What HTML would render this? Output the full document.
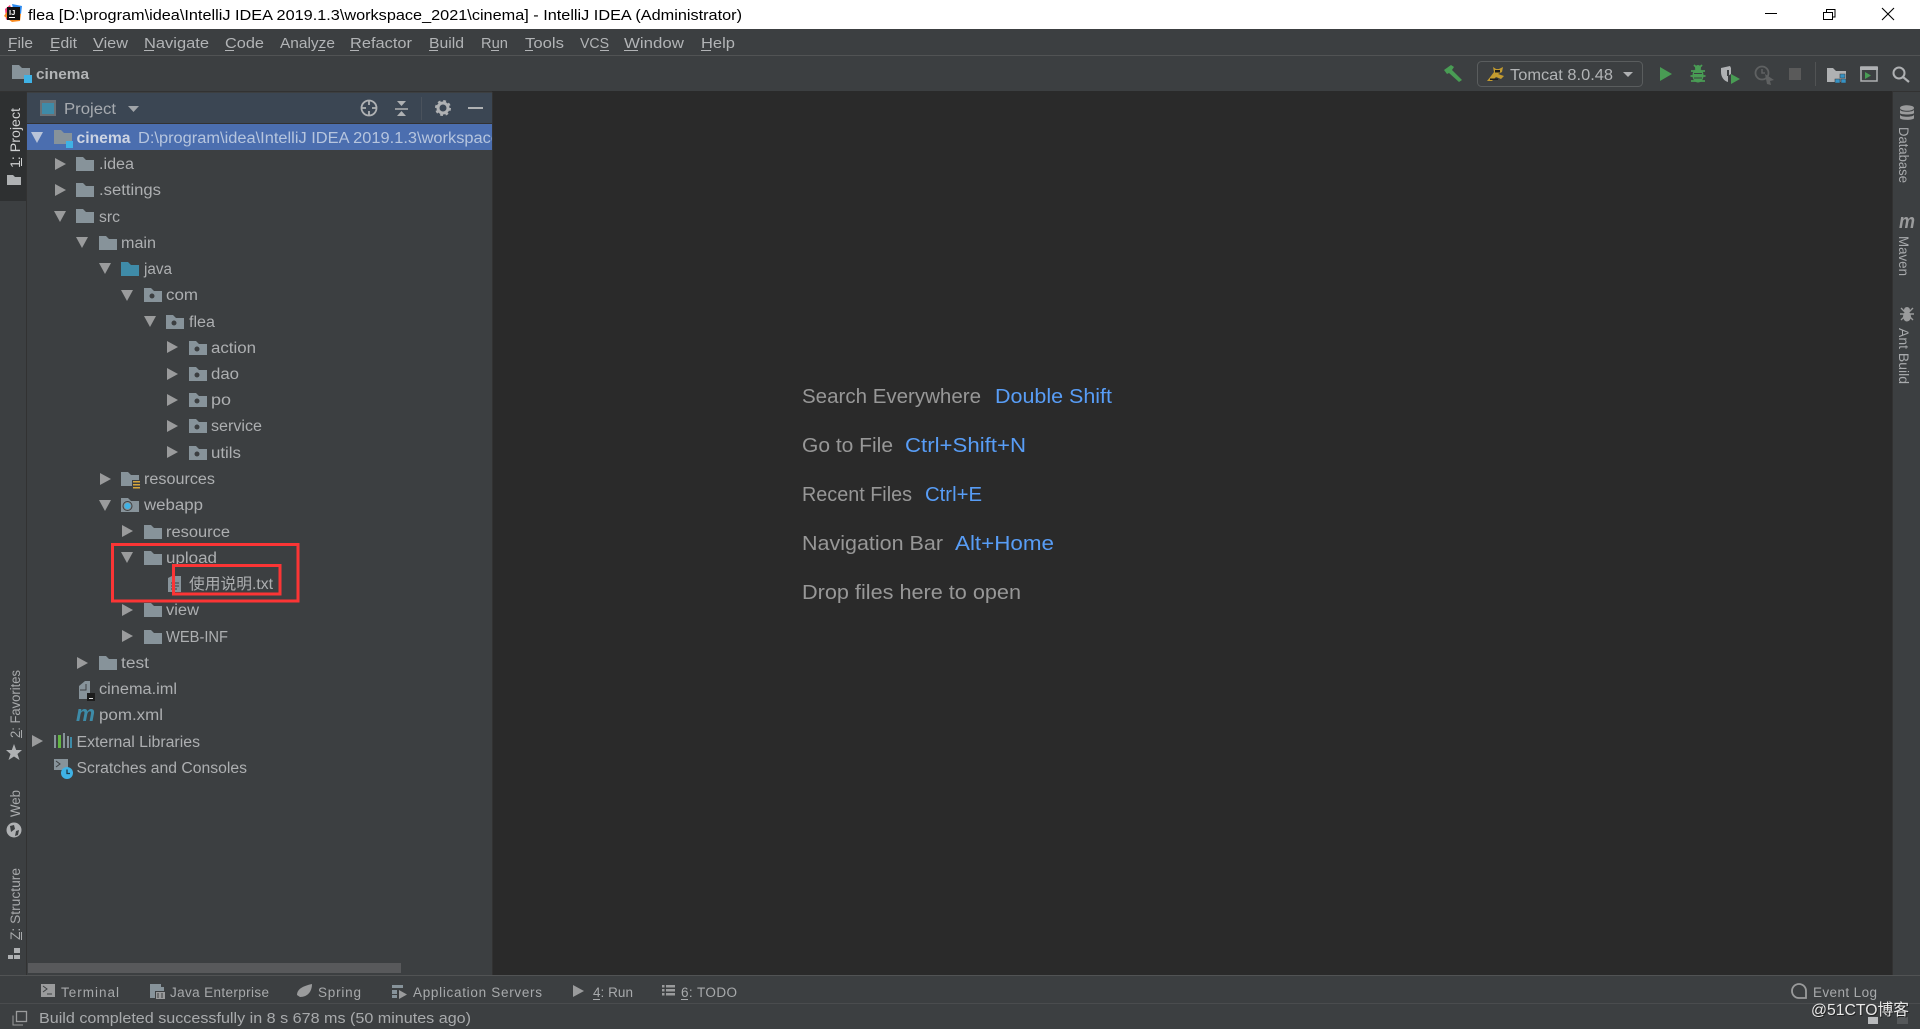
<!DOCTYPE html>
<html><head><meta charset="utf-8"><title>flea - IntelliJ IDEA</title>
<style>
html,body{margin:0;padding:0;background:#3c3f41;overflow:hidden}
svg{display:block}
text{font-family:"Liberation Sans","Noto Sans CJK SC",sans-serif;white-space:pre}
.t{font-size:15.5px;fill:#adafb1}
.m{font-size:15px;fill:#b2b4b6}
.b{font-size:13.5px;fill:#a8aaac}
.h{font-size:20px;fill:#979797}
.k{font-size:20px;fill:#589df6}
.r{font-size:13.5px;fill:#a8aaac}
</style></head><body>
<svg width="1920" height="1029" viewBox="0 0 1920 1029" xmlns="http://www.w3.org/2000/svg">
<defs>
<g id="ar"><path d="M0 0L11 6L0 12z" fill="#9a9b9c"/></g>
<g id="ad"><path d="M0 1H12L6 12z" fill="#9a9b9c"/></g>
<g id="f"><path d="M0 0H7L10 3H18V14H0z" fill="#87939a"/></g>
<g id="p"><path d="M0 0H7L10 3H18V14H0z" fill="#87939a"/><circle cx="8" cy="8" r="2.5" fill="#3c3f41"/></g>
<clipPath id="cp"><rect x="27" y="124" width="465" height="26"/></clipPath>
</defs>

<!-- title bar -->
<rect width="1920" height="29" fill="#fff"/>
<path d="M5 9L10 5L13 13L6 20z" fill="#fb3f7a"/><path d="M12 4L22 6L21 14L14 12z" fill="#2f8cf0"/><path d="M4 16L12 22L20 21L21 14L8 10z" fill="#f98b20"/>
<rect x="7" y="7" width="13" height="13" fill="#111"/>
<text x="9" y="15" font-weight="bold" fill="#fff" style="font-size:7.5px">IJ</text>
<rect x="9" y="17" width="6" height="1" fill="#fff"/>
<text x="28" y="20" style="font-size:15px" fill="#000" textLength="714" lengthAdjust="spacingAndGlyphs">flea [D:\program\idea\IntelliJ IDEA 2019.1.3\workspace_2021\cinema] - IntelliJ IDEA (Administrator)</text>
<rect x="1765" y="13" width="12" height="1" fill="#000"/>
<path d="M1823.5 12.5h9v7h-9zM1826.5 12V9.5h8.500v7.500H1833" fill="none" stroke="#000"/>
<path d="M1882 8L1894 20M1894 8L1882 20" stroke="#000" stroke-width="1.100"/>

<!-- menu -->
<rect y="29" width="1920" height="26" fill="#3c3f41"/>
<rect y="55" width="1920" height="1" fill="#515354"/>
<text class="m" x="8" y="48" textLength="25" lengthAdjust="spacingAndGlyphs">File</text>
<text class="m" x="50" y="48" textLength="27" lengthAdjust="spacingAndGlyphs">Edit</text>
<text class="m" x="93" y="48" textLength="35" lengthAdjust="spacingAndGlyphs">View</text>
<text class="m" x="144" y="48" textLength="65" lengthAdjust="spacingAndGlyphs">Navigate</text>
<text class="m" x="225" y="48" textLength="39" lengthAdjust="spacingAndGlyphs">Code</text>
<text class="m" x="280" y="48" textLength="55" lengthAdjust="spacingAndGlyphs">Analyze</text>
<text class="m" x="350" y="48" textLength="62" lengthAdjust="spacingAndGlyphs">Refactor</text>
<text class="m" x="429" y="48" textLength="35" lengthAdjust="spacingAndGlyphs">Build</text>
<text class="m" x="481" y="48" textLength="27" lengthAdjust="spacingAndGlyphs">Run</text>
<text class="m" x="525" y="48" textLength="39" lengthAdjust="spacingAndGlyphs">Tools</text>
<text class="m" x="580" y="48" textLength="29" lengthAdjust="spacingAndGlyphs">VCS</text>
<text class="m" x="624" y="48" textLength="60" lengthAdjust="spacingAndGlyphs">Window</text>
<text class="m" x="701" y="48" textLength="34" lengthAdjust="spacingAndGlyphs">Help</text>
<g fill="#b2b4b6">
<rect x="8" y="50" width="8" height="1"/><rect x="50" y="50" width="8" height="1"/><rect x="93" y="50" width="10" height="1"/><rect x="144" y="50" width="10" height="1"/><rect x="225" y="50" width="9" height="1"/><rect x="318" y="50" width="7" height="1"/><rect x="350" y="50" width="9" height="1"/><rect x="429" y="50" width="9" height="1"/><rect x="491" y="50" width="8" height="1"/><rect x="525" y="50" width="8" height="1"/><rect x="600" y="50" width="9" height="1"/><rect x="624" y="50" width="14" height="1"/><rect x="701" y="50" width="10" height="1"/>
</g>

<!-- nav bar -->
<rect y="56" width="1920" height="35" fill="#3c3f41"/>
<rect y="91" width="1920" height="1" fill="#323232"/>
<use href="#f" x="12" y="65" />
<rect x="24" y="75" width="8" height="8" fill="#3fb2e5"/>
<text x="36" y="79" font-weight="bold" style="font-size:15px;fill:#b2b4b6" textLength="53" lengthAdjust="spacingAndGlyphs">cinema</text>

<!-- hammer -->
<path d="M1444 70L1451 65L1454 67L1452 70L1462 80L1459 82L1449 73L1447 74z" fill="#499c54"/>
<rect x="1477.500" y="61.500" width="165" height="25" rx="4" fill="none" stroke="#5a5d5e"/>
<path d="M1487 81L1491 76L1494 72L1493 67L1496 69L1499 69L1503 67L1502 72L1498 74L1504 76L1501 79L1496 77L1492 81z" fill="#c29a2f"/>
<path d="M1495 70h5v2.500h-5zM1490 78.500h8v1.500h-8z" fill="#1b1b1b"/>
<text x="1510" y="80" style="font-size:15.5px;fill:#b2b4b6" textLength="103" lengthAdjust="spacingAndGlyphs">Tomcat 8.0.48</text>
<path d="M1623 72H1633L1628 77z" fill="#afb1b3"/>
<path d="M1660 67L1672 74L1660 81z" fill="#499c54"/>
<!-- bug -->
<ellipse cx="1698" cy="75.500" rx="5.500" ry="7" fill="#499c54"/>
<circle cx="1698" cy="68" r="3" fill="#499c54"/>
<path d="M1691 71H1705M1690.500 76H1705.500M1691 81H1705M1694 65L1696 67M1702 65L1700 67" stroke="#499c54" stroke-width="1.800"/>
<path d="M1694 73.500H1702M1694 78H1702" stroke="#3c3f41" stroke-width="1"/>
<!-- coverage -->
<path d="M1721 68L1730 66L1731 68V74L1728 76V82C1724 81 1721 77 1721 72z" fill="#afb1b3"/>
<path d="M1727 70h2v6h-2z" fill="#3c3f41"/>
<path d="M1731 74L1740 79L1731 84z" fill="#499c54"/>
<!-- profiler -->
<circle cx="1762" cy="73" r="6.500" fill="none" stroke="#5f6162" stroke-width="1.800"/>
<path d="M1762 69v4h3" stroke="#5f6162" fill="none" stroke-width="1.500"/>
<path d="M1765 74L1774 80L1770 81L1771 85L1767 84z" fill="#5f6162"/>
<rect x="1789" y="68" width="12" height="12" fill="#5a5a5a"/>
<rect x="1815" y="62" width="1" height="24" fill="#515354"/>
<!-- project structure -->
<path d="M1827 68H1833L1836 71H1846V82H1827z" fill="#afb1b3"/>
<path d="M1840 74h5v4h-5zM1835 79h5v4h-5zM1841 79h5v4h-5z" fill="#3592c4" stroke="#3c3f41" stroke-width=".6"/>
<!-- run window -->
<rect x="1861" y="67" width="16" height="14" fill="none" stroke="#afb1b3" stroke-width="1.500"/>
<rect x="1860" y="67" width="18" height="3" fill="#afb1b3"/>
<path d="M1865 72L1871 75.500L1865 79z" fill="#499c54"/>
<!-- search -->
<circle cx="1899" cy="73" r="5.500" fill="none" stroke="#afb1b3" stroke-width="2"/>
<path d="M1903 77L1909 82" stroke="#afb1b3" stroke-width="2.200"/>

<!-- left strip -->
<rect x="0" y="92" width="27" height="883" fill="#3c3f41"/>
<rect x="26" y="92" width="1" height="883" fill="#323232"/>
<rect x="0" y="92" width="26" height="109" fill="#2e3031"/>
<text transform="translate(20,168) rotate(-90)" style="font-size:13.5px;fill:#d0d1d2" textLength="60" lengthAdjust="spacingAndGlyphs">1: Project</text>
<rect x="21" y="158" width="1" height="8" fill="#d0d1d2"/>
<path d="M7 175H13L15 177H21V185H7z" fill="#afb1b3"/>
<text transform="translate(20,738) rotate(-90)" class="r" textLength="68" lengthAdjust="spacingAndGlyphs">2: Favorites</text>
<rect x="21" y="730" width="1" height="8" fill="#a8aaac"/>
<path d="M14 744L16.200 750H22L17.500 754L19.500 760L14 756.500L8.500 760L10.500 754L6 750H11.800z" fill="#afb1b3"/>
<text transform="translate(20,817) rotate(-90)" class="r" textLength="27" lengthAdjust="spacingAndGlyphs">Web</text>
<circle cx="14" cy="830" r="7.500" fill="#afb1b3"/>
<path d="M10 826L14 825L15 829L11 832zM16 831L19 830L18 835L15 836z" fill="#3c3f41"/>
<text transform="translate(20,940) rotate(-90)" class="r" textLength="72" lengthAdjust="spacingAndGlyphs">Z: Structure</text>
<rect x="21" y="932" width="1" height="8" fill="#a8aaac"/>
<path d="M14 948h6v5h-6zM8 955h5v4H8zM14 955h6v4h-6z" fill="#afb1b3"/>

<!-- project pane -->
<rect x="27" y="92" width="465" height="883" fill="#3c3f41"/>
<rect x="27" y="93" width="465" height="30" fill="#3b4653"/>
<rect x="27" y="123" width="465" height="1" fill="#323232"/>
<rect x="40" y="100" width="16" height="16" fill="#6a7075"/>
<rect x="42" y="103" width="12" height="11" fill="#3f8ba8"/>
<text x="64" y="114" style="font-size:15.5px;fill:#a7abb0" textLength="52" lengthAdjust="spacingAndGlyphs">Project</text>
<path d="M128 106H139L133.500 112z" fill="#a0a4a8"/>
<circle cx="369" cy="108" r="7.500" fill="none" stroke="#afb1b3" stroke-width="1.800"/>
<path d="M369 100V105M369 111V116M361 108H366M372 108H377" stroke="#afb1b3" stroke-width="1.800"/>
<path d="M395 109H408" stroke="#afb1b3" stroke-width="1.500"/>
<path d="M397 101H406L401.500 106zM397 116H406L401.500 111z" fill="#afb1b3"/>
<rect x="421" y="97" width="1" height="23" fill="#4a525c"/>
<circle cx="443" cy="108" r="5" fill="none" stroke="#afb1b3" stroke-width="3"/>
<circle cx="443" cy="108" r="7" fill="none" stroke="#afb1b3" stroke-width="2" stroke-dasharray="2.800 2.700"/>
<rect x="468" y="107" width="15" height="2" fill="#afb1b3"/>

<!-- selected -->
<rect x="27" y="124" width="465" height="26" fill="#4b6eaf"/>
<path d="M31 132H43L37 143z" fill="#b9c4d8"/>
<use href="#f" x="54" y="130" /><rect x="66" y="141" width="7" height="7" fill="#3fb2e5"/>
<text x="76.500" y="143" font-weight="bold" style="font-size:15.500px;fill:#cdd4e2" textLength="54" lengthAdjust="spacingAndGlyphs">cinema</text>
<g clip-path="url(#cp)"><text x="138" y="143" style="font-size:15.500px;fill:#b6c5de" textLength="362" lengthAdjust="spacingAndGlyphs">D:\program\idea\IntelliJ IDEA 2019.1.3\workspace</text></g>

<!-- tree -->
<use href="#ar" x="55" y="158"/><use href="#f" x="76" y="157"/><text class="t" x="99" y="169" textLength="35" lengthAdjust="spacingAndGlyphs">.idea</text>
<use href="#ar" x="55" y="184"/><use href="#f" x="76" y="183"/><text class="t" x="99" y="195" textLength="62" lengthAdjust="spacingAndGlyphs">.settings</text>
<use href="#ad" x="54" y="210"/><use href="#f" x="76" y="209"/><text class="t" x="99" y="222" textLength="21" lengthAdjust="spacingAndGlyphs">src</text>
<use href="#ad" x="76" y="236"/><use href="#f" x="99" y="236"/><text class="t" x="121" y="248" textLength="35" lengthAdjust="spacingAndGlyphs">main</text>
<use href="#ad" x="99" y="262"/><path d="M121 262H128L131 265H139V276H121z" fill="#3f8ba8"/><text class="t" x="144" y="274" textLength="28" lengthAdjust="spacingAndGlyphs">java</text>
<use href="#ad" x="121" y="289"/><use href="#p" x="144" y="288"/><text class="t" x="166" y="300" textLength="32" lengthAdjust="spacingAndGlyphs">com</text>
<use href="#ad" x="144" y="315"/><use href="#p" x="166" y="315"/><text class="t" x="189" y="327" textLength="26" lengthAdjust="spacingAndGlyphs">flea</text>
<use href="#ar" x="167" y="341"/><use href="#p" x="189" y="341"/><text class="t" x="211" y="353" textLength="45" lengthAdjust="spacingAndGlyphs">action</text>
<use href="#ar" x="167" y="368"/><use href="#p" x="189" y="367"/><text class="t" x="211" y="379" textLength="28" lengthAdjust="spacingAndGlyphs">dao</text>
<use href="#ar" x="167" y="394"/><use href="#p" x="189" y="393"/><text class="t" x="211" y="405" textLength="20" lengthAdjust="spacingAndGlyphs">po</text>
<use href="#ar" x="167" y="420"/><use href="#p" x="189" y="419"/><text class="t" x="211" y="431" textLength="51" lengthAdjust="spacingAndGlyphs">service</text>
<use href="#ar" x="167" y="446"/><use href="#p" x="189" y="446"/><text class="t" x="211" y="458" textLength="30" lengthAdjust="spacingAndGlyphs">utils</text>
<use href="#ar" x="100" y="473"/><use href="#f" x="121" y="472"/>
<path d="M132 480h8v10h-8z" fill="#3c3f41"/><path d="M133 481h7v1.500h-7zM133 484h7v1.500h-7zM133 487h7v1.500h-7z" fill="#d6a63c"/>
<text class="t" x="144" y="484" textLength="71" lengthAdjust="spacingAndGlyphs">resources</text>
<use href="#ad" x="99" y="499"/><use href="#f" x="121" y="498"/><circle cx="127.500" cy="506" r="3" fill="#3fb2e5"/><circle cx="127.500" cy="506" r="4.500" fill="none" stroke="#3c3f41"/>
<text class="t" x="144" y="510" textLength="59" lengthAdjust="spacingAndGlyphs">webapp</text>
<use href="#ar" x="122" y="525"/><use href="#f" x="144" y="525"/><text class="t" x="166" y="537" textLength="64" lengthAdjust="spacingAndGlyphs">resource</text>
<use href="#ad" x="121" y="551"/><use href="#f" x="144" y="551"/><text class="t" x="166" y="563" textLength="51" lengthAdjust="spacingAndGlyphs">upload</text>
<path d="M168 578L172 576H181V592H168z" fill="#87939a"/><path d="M171 583H179M171 586H179M171 589H177" stroke="#3c3f41"/>
<text class="t" x="189" y="589" textLength="84" lengthAdjust="spacingAndGlyphs">使用说明.txt</text>
<use href="#ar" x="122" y="604"/><use href="#f" x="144" y="603"/><text class="t" x="166" y="615" textLength="33" lengthAdjust="spacingAndGlyphs">view</text>
<use href="#ar" x="122" y="630"/><use href="#f" x="144" y="630"/><text class="t" x="166" y="642" textLength="62" lengthAdjust="spacingAndGlyphs">WEB-INF</text>
<use href="#ar" x="77" y="657"/><use href="#f" x="99" y="656"/><text class="t" x="121" y="668" textLength="28" lengthAdjust="spacingAndGlyphs">test</text>
<path d="M79 686L85 681H90V697H92V699H79z" fill="#87939a"/><path d="M86 684V690H80" fill="none" stroke="#3c3f41"/>
<rect x="87" y="693" width="8" height="8" fill="#1d1d1d"/><rect x="89" y="698" width="4" height="1" fill="#ddd"/>
<text class="t" x="99" y="694" textLength="78" lengthAdjust="spacingAndGlyphs">cinema.iml</text>
<text x="76" y="721" font-weight="bold" font-style="italic" style="font-size:22px;fill:#3d8ba8" textLength="19" lengthAdjust="spacingAndGlyphs">m</text>
<text class="t" x="99" y="720" textLength="64" lengthAdjust="spacingAndGlyphs">pom.xml</text>
<use href="#ar" x="32" y="735"/>
<path d="M54 735h2v13h-2z" fill="#87939a"/><path d="M58 735h3v13h-3z" fill="#62b543"/><path d="M63 733h2v15h-2z" fill="#87939a"/><path d="M67 736h2v12h-2z" fill="#87939a"/><path d="M70 737h2v11h-2z" fill="#3d8ba8"/>
<text class="t" x="76.500" y="747" textLength="123.500" lengthAdjust="spacingAndGlyphs">External Libraries</text>
<rect x="54" y="759" width="14" height="11" fill="#87939a"/><path d="M56 761L60 764L56 767" fill="none" stroke="#3c3f41"/>
<circle cx="67" cy="773" r="6" fill="#3fb2e5"/><path d="M67 769.500V773.500H70" fill="none" stroke="#1d3a4a" stroke-width="1.300"/>
<text class="t" x="76.500" y="773" textLength="170.500" lengthAdjust="spacingAndGlyphs">Scratches and Consoles</text>

<!-- red boxes -->
<rect x="112.500" y="544.500" width="185.500" height="56.500" fill="none" stroke="#fb3535" stroke-width="3"/>
<rect x="173.500" y="565.500" width="106.500" height="28.500" fill="none" stroke="#fb3535" stroke-width="3"/>

<!-- scrollbar -->
<rect x="28" y="963" width="373" height="10" fill="#58595b"/>

<!-- editor -->
<rect x="492" y="91" width="1400" height="884" fill="#2a2a2a"/>
<rect x="492" y="92" width="1" height="883" fill="#323232"/>
<text class="h" x="802" y="403" textLength="179" lengthAdjust="spacingAndGlyphs">Search Everywhere</text>
<text class="k" x="995" y="403" textLength="117" lengthAdjust="spacingAndGlyphs">Double Shift</text>
<text class="h" x="802" y="452" textLength="91" lengthAdjust="spacingAndGlyphs">Go to File</text>
<text class="k" x="905" y="452" textLength="121" lengthAdjust="spacingAndGlyphs">Ctrl+Shift+N</text>
<text class="h" x="802" y="501" textLength="110" lengthAdjust="spacingAndGlyphs">Recent Files</text>
<text class="k" x="925" y="501" textLength="57" lengthAdjust="spacingAndGlyphs">Ctrl+E</text>
<text class="h" x="802" y="550" textLength="141" lengthAdjust="spacingAndGlyphs">Navigation Bar</text>
<text class="k" x="955" y="550" textLength="99" lengthAdjust="spacingAndGlyphs">Alt+Home</text>
<text class="h" x="802" y="599" textLength="219" lengthAdjust="spacingAndGlyphs">Drop files here to open</text>

<!-- right strip -->
<rect x="1892" y="92" width="28" height="883" fill="#3c3f41"/>
<rect x="1892" y="92" width="1" height="883" fill="#323232"/>
<ellipse cx="1907" cy="108" rx="7" ry="2.800" fill="#9a9b9c"/>
<path d="M1900 109.500v3.500c0 2 14 2 14 0v-3.500c0 3-14 3-14 0zM1900 114.500v3.500c0 2.500 14 2.500 14 0v-3.500c0 3-14 3-14 0z" fill="#9a9b9c"/>
<text transform="translate(1899,127) rotate(90)" class="r" textLength="56" lengthAdjust="spacingAndGlyphs">Database</text>
<text x="1899" y="228" font-weight="bold" font-style="italic" style="font-size:20px;fill:#9a9b9c" textLength="16" lengthAdjust="spacingAndGlyphs">m</text>
<text transform="translate(1899,236) rotate(90)" class="r" textLength="40" lengthAdjust="spacingAndGlyphs">Maven</text>
<ellipse cx="1907" cy="316.500" rx="4" ry="5" fill="#9a9b9c"/><circle cx="1907" cy="310" r="3" fill="#9a9b9c"/>
<path d="M1901 308L1913 320M1913 308L1901 320M1900 314H1914" stroke="#9a9b9c" stroke-width="1.400"/>
<text transform="translate(1899,328) rotate(90)" class="r" textLength="56" lengthAdjust="spacingAndGlyphs">Ant Build</text>

<!-- bottom tool bar -->
<rect y="975" width="1920" height="1" fill="#515354"/>
<rect y="976" width="1920" height="27" fill="#3c3f41"/>
<rect y="1003" width="1920" height="1" fill="#4a4c4e"/>
<rect x="41" y="984" width="14" height="13" fill="#9a9b9c"/><path d="M43 986L47 989L43 992M47 994H52" fill="none" stroke="#3c3f41"/>
<text class="b" x="61" y="997" textLength="58" lengthAdjust="spacing">Terminal</text>
<path d="M150 984H161V987H164V998H150z" fill="#87939a"/><rect x="155" y="991" width="10" height="8" fill="#3c3f41"/><path d="M156 992h9v7h-9z" fill="#9a9b9c"/><path d="M158 993v5M162 993v5" stroke="#3c3f41"/>
<text class="b" x="170" y="997" textLength="99" lengthAdjust="spacing">Java Enterprise</text>
<path d="M297 995C297 989 303 986 312 984C312 991 308 997 300 997z" fill="#9a9b9c"/>
<text class="b" x="318" y="997" textLength="43" lengthAdjust="spacing">Spring</text>
<path d="M392 985h11v3h-11zM392 990h5v4h-5zM392 995h5v3h-5z" fill="#87939a"/><path d="M399 990L407 994.500L399 999z" fill="#9a9b9c"/>
<text class="b" x="413" y="997" textLength="129" lengthAdjust="spacing">Application Servers</text>
<path d="M573 985L584 991L573 997z" fill="#9a9b9c"/>
<text class="b" x="593" y="997" textLength="40" lengthAdjust="spacing">4: Run</text>
<rect x="593" y="999" width="7" height="1" fill="#a8aaac"/>
<path d="M662 985h2.500v2.500H662zM666 985h9v2.500h-9zM662 989h2.500v2.500H662zM666 989h9v2.500h-9zM662 993h2.500v2.500H662zM666 993h9v2.500h-9z" fill="#9a9b9c"/>
<text class="b" x="681" y="997" textLength="56" lengthAdjust="spacing">6: TODO</text>
<rect x="681" y="999" width="7" height="1" fill="#a8aaac"/>
<path d="M1806 998H1799A7 7 0 1 1 1806 991z" fill="none" stroke="#9a9b9c" stroke-width="1.800"/>
<text class="b" x="1813" y="997" textLength="64" lengthAdjust="spacing">Event Log</text>

<!-- status bar -->
<rect y="1004" width="1920" height="25" fill="#3c3f41"/>
<path d="M13 1015.500V1025H23" fill="none" stroke="#9a9b9c"/>
<rect x="16.500" y="1011.500" width="10" height="10" fill="none" stroke="#9a9b9c" stroke-width="1.300"/>
<text x="39" y="1023" style="font-size:15px;fill:#a8aaac" textLength="432" lengthAdjust="spacingAndGlyphs">Build completed successfully in 8 s 678 ms (50 minutes ago)</text>
<rect x="1868" y="1017" width="10" height="7" fill="#b8babc"/>
<rect x="1897" y="1017" width="11" height="7" fill="#55585a"/>
<text x="1812" y="1016" style="font-size:16px;fill:#222" textLength="98" lengthAdjust="spacingAndGlyphs">@51CTO博客</text>
<text x="1811" y="1015" style="font-size:16px;fill:#e8e8e8" textLength="98" lengthAdjust="spacingAndGlyphs">@51CTO博客</text>
</svg>
</body></html>
